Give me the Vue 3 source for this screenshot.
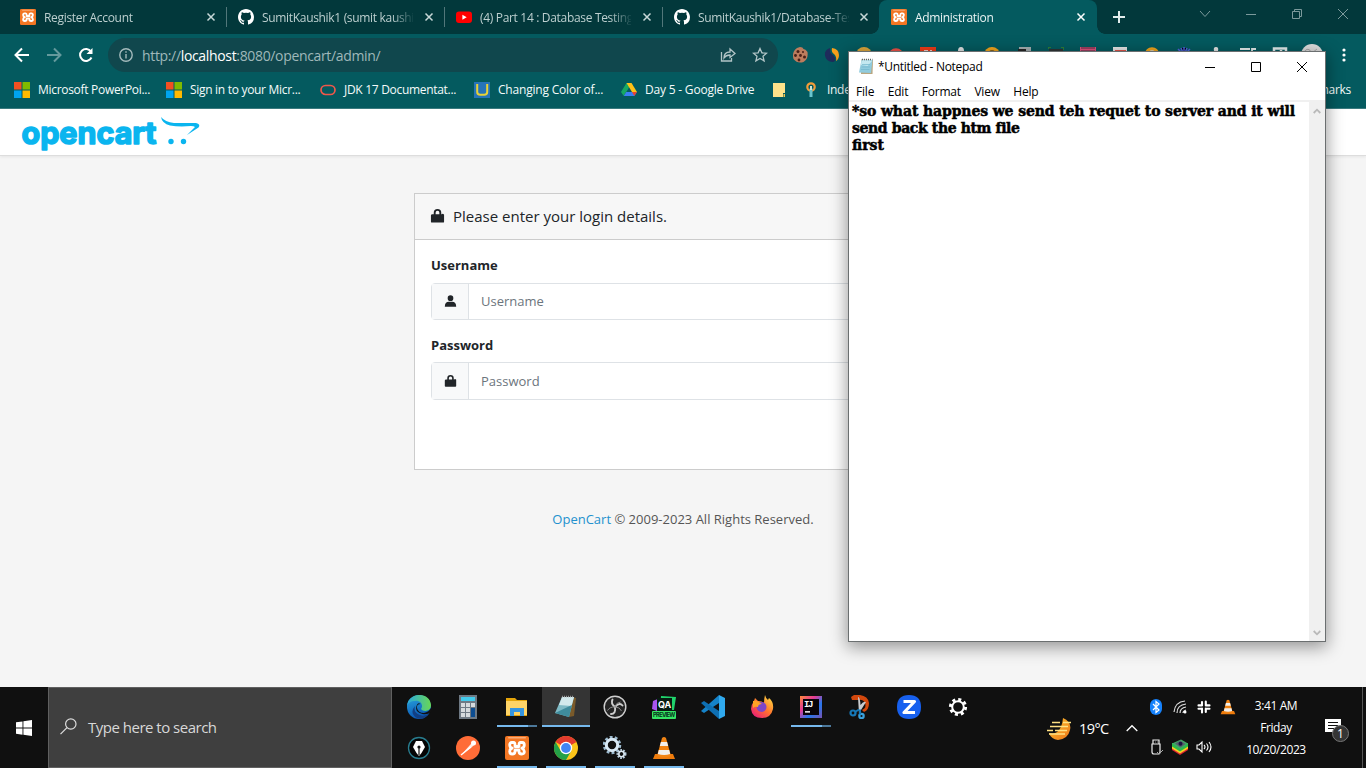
<script setup>
const cone = '<path d="M3 18h18l2 5H1z" fill="#ee7b0c"/><path d="M10 2q2-2 4 0l5 18q-7 3-14 0z" fill="#f18414"/><path d="M8.9 6h6.2l1.1 4H7.8zM6.8 14h10.4l1 4q-6 2-12.4 0z" fill="#f1efec"/>'
const xampp = '<rect width="24" height="24" rx="2" fill="#f37623"/><rect x="3" y="1" width="18" height="1.500" rx=".7" fill="#f9ac78"/><path d="M8.500 6.500H6.800Q4.700 6.500 4.700 9t2.500 3.200Q4.700 13 4.700 15.500t2.500 2.500Q10 18 10 15.500V14h4v1.500q0 2.500 2.800 2.500t2.500-2.500-2.500-3.300Q19.300 11.500 19.300 9t-2.100-2.500h-1.700Q14 6.500 14 9v1.500h-4V9q0-2.500-1.500-2.500z" fill="none" stroke="#fff" stroke-width="2.800" stroke-linejoin="round"/>'
const github = '<path fill="#fff" d="M8 0C3.6 0 0 3.6 0 8c0 3.5 2.3 6.5 5.5 7.6.4.1.5-.2.5-.4v-1.5c-2.2.5-2.7-1-2.7-1-.4-.9-.9-1.1-.9-1.1-.7-.5.1-.5.1-.5.8.1 1.2.8 1.2.8.7 1.2 1.9.9 2.3.7.1-.5.3-.9.5-1.1-1.8-.2-3.6-.9-3.6-4 0-.9.3-1.6.8-2.1-.1-.2-.4-1 .1-2.1 0 0 .7-.2 2.2.8a7.5 7.5 0 0 1 4 0c1.5-1 2.2-.8 2.2-.8.4 1.1.2 1.9.1 2.1.5.6.8 1.3.8 2.1 0 3.1-1.9 3.7-3.7 3.9.3.3.6.8.6 1.5v2.3c0 .2.1.5.5.4A8 8 0 0 0 16 8c0-4.4-3.6-8-8-8z"/>'
const microsoft = '<path fill="#f25022" d="M0 0h7.5v7.5H0z"/><path fill="#7fba00" d="M8.5 0H16v7.5H8.5z"/><path fill="#00a4ef" d="M0 8.5h7.5V16H0z"/><path fill="#ffb900" d="M8.5 8.5H16V16H8.5z"/>'
const chrome = '<circle cx="12" cy="12" r="12" fill="#fcc419"/><path d="M12 12 1.6 6A12 12 0 0 1 22.4 6z" fill="#e33b2e"/><path d="M1.6 6A12 12 0 0 0 12 24l5.2-9L12 12l-5.2 3z" fill="#24a148"/><circle cx="12" cy="12" r="6.2" fill="#fff"/><circle cx="12" cy="12" r="4.9" fill="#4285f4"/>'

const tabs = [
  { title: 'Register Account', icon: xampp, box: '0 0 24 24' },
  { title: 'SumitKaushik1 (sumit kaushi', icon: github, box: '0 0 16 16' },
  { title: '(4) Part 14 : Database Testing', icon: '<rect y="2.5" width="16" height="11.5" rx="3" fill="#f00"/><path d="M6.4 5.8v5l4.3-2.5z" fill="#fff"/>', box: '0 0 16 16' },
  { title: 'SumitKaushik1/Database-Tes', icon: github, box: '0 0 16 16' },
  { title: 'Administration', icon: xampp, box: '0 0 24 24', active: true }
]

const bookmarks = [
  { title: 'Microsoft PowerPoi...', icon: microsoft, w: 152 },
  { title: 'Sign in to your Micr...', icon: microsoft, w: 154 },
  { title: 'JDK 17 Documentat...', icon: '<rect x="1" y="3.5" width="14" height="9" rx="4.5" fill="none" stroke="#f0574a" stroke-width="1.7"/>', w: 154 },
  { title: 'Changing Color of...', icon: '<path fill="#2674b8" d="M0 0h16v16H0z"/><path d="M3.2 2v8q0 2.800 3 2.800h4q3 0 3-2.800V2" fill="none" stroke="#e8d237" stroke-width="2"/>', w: 147 },
  { title: 'Day 5 - Google Drive', icon: '<path d="M5.500 1h5L8 5.600 2.800 14 0 10z" fill="#16a763"/><path d="M5.500 1h5L16 10h-5z" fill="#ffc116"/><path d="M2.800 14 5.200 10H16l-2.700 4z" fill="#3a7ef2"/><path d="M11 10h5l-2.700 4z" fill="#e84334"/>', w: 150 },
  { title: '', icon: '<path d="M2 1h12v9h-3v5H2z" fill="#ffe28a"/><path d="M2 1h12v10h-2v4H2z" fill="#ffe28a"/><path d="M12.500 12H14v3h-1.500z" fill="#f1c24b"/>', w: 32 },
  { title: 'Inde', icon: '<circle cx="8" cy="5" r="3.700" fill="none" stroke="#f29d38" stroke-width="2.200"/><path d="M6.500 6.500h3V15h-3z" fill="#68c3cd"/><path d="M7 4h2v4H7z" fill="#cfe6d6"/>', w: 80 }
]

const extensions = [
  '<path d="M8 0q3 0 3.500 2 2 0 4 3 1 7-4 10-6 2-10-3Q-.5 5 5 1z" fill="#bd7c5d"/><g fill="#4a2018"><circle cx="6" cy="4.500" r="1.500"/><circle cx="3.500" cy="8.500" r="1.400"/><circle cx="8.500" cy="8.500" r="1.400"/><circle cx="7" cy="13" r="1.400"/><circle cx="12.500" cy="10" r="1.500"/><circle cx="11" cy="5" r="1"/></g>',
  '<path d="M6 1Q0 3 1 8.500q1 6.500 8 6.500 3-1 2-4-1-2.500-3.500-4-2-2-1.500-6z" fill="#1f2b5b"/><path d="M8 1q7 1 7 7 0 4-3 6 1-4-2-7Q7 5 8 1z" fill="#f9a11b"/>',
  '<circle cx="8" cy="8" r="8" fill="#dda73b"/>',
  '<path d="M2 9a6 6 0 0 1 12 0" fill="none" stroke="#ef5147" stroke-width="3.500"/><path d="M5 8a3 3 0 0 1 6 0z" fill="#83ccd3"/>',
  '<path d="M0 0h16v16H0z" fill="#f03b17"/><path d="M4 4h4M10 4h2" stroke="#fff" stroke-width="1.500"/>',
  '<path d="M3 4h3q0-4 3-4t3 4h3v10H3z" fill="#e1e3e4"/>',
  '<circle cx="8" cy="8" r="8" fill="#f3a61c"/><circle cx="8" cy="8" r="4" fill="none" stroke="#5a461d" stroke-width="1.500"/>',
  '<path d="M3 0h12v14H3z" fill="#a5b0b2"/><path d="M2 2h8v3H2z" fill="#252525"/>',
  '<path d="M1 2h14v11H1z" fill="#2f3536"/><path d="M0 2V0h3m10 0h3v3" fill="none" stroke="#2f7d37" stroke-width="2"/>',
  '<path d="M0 0h16v14H0z" fill="#e2537e"/><path d="M1 1h14M1 4h14" stroke="#562a40" stroke-width="1.200"/>',
  '<path d="M1 0h14v14H1z" fill="#e6e6e6"/><path d="M3 3h11v12H3z" fill="#e2554a"/>',
  '<circle cx="8" cy="7.500" r="5.800" fill="#d9d9d9" stroke="#f1a51b" stroke-width="3"/>',
  '<path d="M8 0v16M2 2l12 12M0 8h16M14 2 2 14M5 1l3 7 3-7" stroke="#5260e2" stroke-width="1.500"/>',
  '<path d="M2 4h4q-1-4 2-4t2 4h5v10H2z" fill="#e3e5e5"/>',
  '<path d="M0 2h10M0 5h7M12 14V2h4" fill="none" stroke="#e4eeee" stroke-width="1.800"/>',
  '<path d="M2 1.500h12v12H2zM9 3v10" fill="none" stroke="#e4eeee" stroke-width="2.500"/>'
]

const notepad = '<path d="m19 2 3 1-2 18-5 1z" fill="#7a5a2a"/><path d="M8 2h12l-5 20-14-4z" fill="#7fbac5"/><path d="M8 2h12l-2.500 9L5 10z" fill="#d3e9ec"/><path d="m1 18 17-8-3 12z" fill="#3f8b9c"/><path d="M8 1.500h12" stroke="#999" stroke-dasharray="1 1" stroke-width="1.500"/>'

const apps = [
  { name: 'edge', icon: '<defs><linearGradient id="eg" y2="1" x2=".3"><stop stop-color="#2ba9df"/><stop offset="1" stop-color="#0a57b5"/></linearGradient><linearGradient id="eg2"><stop stop-color="#2aa8df"/><stop offset="1" stop-color="#68d855"/></linearGradient></defs><circle cx="12" cy="12" r="12" fill="url(#eg)"/><path d="M0 11C1-3 23-4 24 10c0 7-8 7-10 4 3-4-1-9-6-8-4 0-7 2-8 5z" fill="url(#eg2)"/><path d="M8 11q-2 7 5 9 5 2 9-2-5 8-12 5-8-5-2-12z" fill="#123f84"/><path d="M13.500 9q-4 0-3.500 4 1 5 7 5 5-1 7-5l.5 4q-4 3-9 2-8-2-6-8 1-4 4-2z" fill="#111"/>' },
  { name: 'calculator', icon: '<path d="M3 0h18v24H3z" fill="#6e7984"/><path d="M5 2h14v4H5z" fill="#43cbed"/><path d="M5 8h4v4H5zm5 0h4v4h-4zm5 0h4v4h-4zM5 13h4v4H5zm5 0h4v4h-4zM5 18h4v4H5zm5 0h4v4h-4z" fill="#d5dadd"/><path d="M15 13h4v9h-4z" fill="#0d4d91"/>' },
  { name: 'explorer', open: 'split', icon: '<path d="M1 3h9l2 2h10v16H1z" fill="#e5a50a"/><path d="M1 6h21v14H1z" fill="#ffd467"/><path d="M5 13h14v8h-4v-4H9v4H5z" fill="#3695df"/>' },
  { name: 'notepad', open: 'current', icon: notepad },
  { name: 'recorder', icon: '<circle cx="12" cy="12" r="10.800" fill="#242424" stroke="#cfcfcf" stroke-width="1.400"/><path d="M9.500 4.500q-2 4 2.500 7.500M19.500 10.500q-3-3.500-7.500 1.500M8 19q5 0 4-7" fill="none" stroke="#cfcfcf" stroke-width="1.900" stroke-linecap="round"/><path d="M12 12q5 0 6.500 4M12 12q-5-.5-7.500 3.500M12 12q1-4.500 5.500-5" fill="none" stroke="#8c8c8c" stroke-width="1"/>' },
  { name: 'qa', icon: '<path d="m1 6 7-3-3 13-5-2z" fill="#a955f1"/><path d="m9 1 15 1-2 13H8z" fill="#20d36c"/><path d="M5 3h15v13H5z" fill="#071b11"/><text x="6" y="12.500" font-size="9" letter-spacing="0" font-weight="bold" font-family="Inter,sans-serif" fill="#fff">QA</text><rect y="16" width="24" height="8" rx="1" fill="#35e665"/><text x="1" y="22.300" font-size="5.800" textLength="22" font-weight="bold" font-family="Inter,sans-serif" fill="#07351b">PREVIEW</text>' },
  { name: 'code', icon: '<path d="M18 0v8L3 18l-3-2z" fill="#1583c9"/><path d="M18 24v-8L3 6 0 8z" fill="#0e6fb2"/><path d="m18 0 6 3v18l-6 3z" fill="#30a9ee"/>' },
  { name: 'firefox', icon: '<defs><linearGradient id="fg" x1="1" x2=".2" y2="1"><stop stop-color="#ffed43"/><stop offset=".55" stop-color="#ff742d"/><stop offset="1" stop-color="#e91c78"/></linearGradient></defs><path d="M15 0q1 4 3 5l1-2q5 4 4 11-2 9-11 9Q2 23 1 14q0-4 3-8l1-3 3 3q4 0 6 2 0-4 1-8z" fill="url(#fg)"/><circle cx="11.500" cy="12" r="5" fill="#7e45c7"/><path d="M3 6q4-1 9 3-4 0-4 3-3-1-5 1z" fill="#ffa125"/>' },
  { name: 'intellij', open: 'split', icon: '<defs><linearGradient id="ig" x2="1" y2="1"><stop stop-color="#ff8a39"/><stop offset=".35" stop-color="#e43a94"/><stop offset=".65" stop-color="#2478ed"/><stop offset="1" stop-color="#7853b3"/></linearGradient></defs><path d="M1 1h22v22H1z" fill="url(#ig)"/><path d="M4 4h16v16H4z" fill="#090409"/><text x="5" y="12" font-family="Liberation Mono,monospace" font-weight="bold" font-size="9" textLength="9" fill="#fff">IJ</text><path d="M6 16h5v1.700H6z" fill="#ddd"/>' },
  { name: 'snip', icon: '<path d="m3 2 3-2h6q8 1 9 8 0 7-5 9l-2-2q5-2 3-7-2-4-7-3H4z" fill="#d3480d"/><path d="M10 2q2 0 2.500 8 3-4 5.500-3l-5 8v4h-2z" fill="#c9cccf"/><circle cx="5" cy="18" r="2.500" fill="none" stroke="#1678b7" stroke-width="2.200"/><circle cx="13.500" cy="21" r="2.200" fill="none" stroke="#3aa0dc" stroke-width="2.200"/><path d="m7 17 4-2.500m1 0v5" stroke="#1678b7" stroke-width="2" fill="none"/>' },
  { name: 'zoom', icon: '<path d="M12 0q12 0 12 12t-12 12T0 12 12 0z" fill="#1760ee"/><path d="M6.500 6.500h11L7 17.500h11" fill="none" stroke="#fff" stroke-width="3.200" stroke-linejoin="round"/>' },
  { name: 'settings', icon: '<circle cx="12" cy="12" r="7.600" fill="none" stroke="#fff" stroke-width="3" stroke-dasharray="3 2.970" /><circle cx="12" cy="12" r="5.800" fill="none" stroke="#fff" stroke-width="2"/>' },
  { name: 'pen', icon: '<circle cx="12" cy="12" r="10.500" fill="#050505" stroke="#287c8e" stroke-width="1.300"/><path d="M9 5h6l3 6-3.500 6-2.500 3-2.500-3L6 11z" fill="#fff"/><circle cx="12" cy="11" r="1.600" fill="#111"/><path d="M12 11v8" stroke="#111" stroke-width="1.200"/>' },
  { name: 'postman', icon: '<circle cx="12" cy="12" r="12" fill="#ff6c37"/><path d="M6 18 14 9l2 2zM14 9l2-2 2 2-2 2" fill="#ffece5"/><circle cx="17.500" cy="7" r="2.500" fill="#fff"/><path d="m5 19 10-8" stroke="#fff" stroke-width="1.500"/>' },
  { name: 'xampp', open: 'full', icon: xampp },
  { name: 'chrome', open: 'full', icon: chrome },
  { name: 'services', open: 'full', icon: '<circle cx="9" cy="9" r="7" fill="none" stroke="#9dbbcf" stroke-width="4.500" stroke-dasharray="2.500 1.900"/><circle cx="9" cy="9" r="5.700" fill="none" stroke="#d8e8f4" stroke-width="3"/><circle cx="18.500" cy="18" r="3.500" fill="none" stroke="#b8cddd" stroke-width="3" stroke-dasharray="1.500 1"/><circle cx="18.500" cy="18" r="2.700" fill="none" stroke="#dce9f2" stroke-width="1.500"/>' },
  { name: 'vlc', open: 'full', icon: cone }
]

const tray = [
  '<rect x="2" width="12" height="16" rx="6" fill="#1682fc"/><path d="m5 5 6 6-3 2.500v-11L11 5l-6 6" fill="none" stroke="#fff" stroke-width="1.200"/>',
  '<path d="M2 13Q3 3 13 2M5 14Q5 6 14 5M8 14q0-5 6-6M11 14q0-2 3-3" fill="none" stroke="#ddd" stroke-width="1.200"/><circle cx="13" cy="13" r="1.500" fill="#fff"/>',
  '<path d="M6 3v3.500M9.800 2.500v4M6 9.500v4M9.800 9.500v3.500M2.500 6.400H6M10 6.400h3.500M2.500 9.700H6M10 9.700h3.500" stroke="#fff" stroke-width="2.100" stroke-linecap="round"/>',
  '<g transform="scale(.667)">' + cone + '</g>',
  '<path d="M4 5h8v8q0 2-2 2H6q-2 0-2-2zM5 5V1h6v4M7 3h.5M9 3h.5" fill="none" stroke="#eee" stroke-width="1.200"/><path d="m9 13 2 2 4-4" fill="none" stroke="#aaa"/>',
  '<path d="m0 11 8 5 8-5V7H0z" fill="#df2532"/><path d="m0 9.500 8 5 8-5V6H0z" fill="#f5d11f"/><path d="m0 7.500 8 5 8-5V4H0z" fill="#27ba4a"/><path d="m0 4.500 8 5.500 8-5.500L9 .5z" fill="#3fa765"/><path d="m3 4.500 5.500 4 5-3.500-5-3.500z" fill="#52636a"/><circle cx="8.500" cy="4.800" r="2" fill="#191342"/>',
  '<path d="M1 6h2l3-3v10l-3-3H1zM8 6q2 2 0 4M10.500 4.500q3 3.500 0 7M13 3q4 5 0 10" fill="none" stroke="#fff" stroke-width="1.100"/>'
]

const lockPath = 'M4 6V4.500a4 4 0 0 1 8 0V6h.500A1.500 1.500 0 0 1 15 7.500V14a1 1 0 0 1-1 1H2a1 1 0 0 1-1-1V7.500A1.500 1.500 0 0 1 2.500 6zM6 6h4V4.500a2 2 0 0 0-4 0z'
const fields = [
  { label: 'Username', path: 'M8 1a3.500 3.500 0 1 1 0 7 3.500 3.500 0 0 1 0-7M1 15q0-6 5-6h4q5 0 5 6z' },
  { label: 'Password', path: lockPath }
]
const menus = ['File', 'Edit', 'Format', 'View', 'Help']
</script>

<template>
  <div class="desktop">
    <header class="tabstrip">
      <div v-for="t in tabs" :key="t.title" class="tab" :class="{ active: t.active }">
        <svg class="fav" :viewBox="t.box" v-html="t.icon"></svg>
        <span class="tab-title">{{ t.title }}</span>
        <svg class="tab-close" viewBox="0 0 10 10"><path d="m1.500 1.500 7 7m0-7-7 7" /></svg>
      </div>
      <svg class="newtab" viewBox="0 0 14 14"><path d="M7 1v12M1 7h12" /></svg>
      <div class="winbtns">
        <svg viewBox="0 0 12 12"><path d="m1 3 5 5.500L11 3" /></svg>
        <svg viewBox="0 0 12 12"><path d="M1 6.500h10" /></svg>
        <svg viewBox="0 0 12 12"><path d="M1.500 3.500h7v7h-7zM3.500 3.500v-2h7v7h-2" /></svg>
        <svg viewBox="0 0 12 12"><path d="m1 1 10 10m0-10L1 11" /></svg>
      </div>
    </header>

    <div class="toolbar">
      <svg class="nav" viewBox="0 0 16 16"><path d="M15 8H2m6-6.500L1.500 8 8 14.500" /></svg>
      <svg class="nav dim" viewBox="0 0 16 16"><path d="M1 8h13M8 1.500 14.500 8 8 14.500" /></svg>
      <svg class="nav" viewBox="0 0 16 16"><path d="M13.500 10.500A6 6 0 1 1 13 4.500" /><path d="M14.500 1v6h-6z" class="solid" /></svg>
      <div class="address">
        <svg class="info" viewBox="0 0 14 14"><circle cx="7" cy="7" r="6.200" /><path d="M7 6v4.500M7 3.200v1.500" /></svg>
        <span class="url">http://<b>localhost</b>:8080/opencart/admin/</span>
        <svg class="share" viewBox="0 0 16 16"><path d="M1.500 5v9h10v-3M4 11q0-6 6-6V2l5 4.500-5 4V8Q6 8 4 11z" /></svg>
        <svg class="share" viewBox="0 0 16 16"><path d="m8 1.500 1.900 4.300 4.700.4-3.600 3.100 1.100 4.600L8 11.500l-4.100 2.400L5 9.300 1.400 6.200l4.700-.4z" /></svg>
      </div>
      <div class="extensions">
        <svg v-for="(e, i) in extensions" :key="i" viewBox="0 0 16 16" v-html="e"></svg>
        <svg class="avatar" viewBox="0 0 22 22"><circle cx="11" cy="11" r="11" fill="#dedede" /><path d="M3 8q4-6 8 1l5-4" stroke="#aaa" fill="none" /></svg>
      </div>
      <svg class="dots" viewBox="0 0 4 14"><circle cx="2" cy="2" r="1.600" /><circle cx="2" cy="7" r="1.600" /><circle cx="2" cy="12" r="1.600" /></svg>
    </div>

    <nav class="bookmarks">
      <div v-for="(b, i) in bookmarks" :key="i" class="bookmark" :style="{ width: b.w + 'px' }">
        <svg viewBox="0 0 16 16" v-html="b.icon"></svg>
        <span>{{ b.title }}</span>
      </div>
      <span class="other">Other bookmarks</span>
    </nav>

    <main class="page">
      <div class="page-head">
        <svg class="logo" width="182" height="40" viewBox="0 0 182 40">
          <text x="1.500" y="30.500" font-size="31" textLength="135" lengthAdjust="spacingAndGlyphs">opencart</text>
          <path d="M141 4q4 5 13 6h22q5 1 2.500 4.500L167 22l8-8q-1-1-4-1-12 1-21-.500-8-2-9-8.500z" />
          <circle cx="151" cy="28.500" r="2.700" /><circle cx="163.500" cy="28.500" r="2.700" />
        </svg>
      </div>
      <section class="card">
        <div class="card-head">
          <svg viewBox="0 0 16 16"><path :d="lockPath" /></svg>
          <span>Please enter your login details.</span>
        </div>
        <div class="card-body">
          <div v-for="f in fields" :key="f.label" class="field">
            <label>{{ f.label }}</label>
            <div class="group">
              <div class="addon"><svg viewBox="0 0 16 16"><path :d="f.path" /></svg></div>
              <div class="input">{{ f.label }}</div>
            </div>
          </div>
        </div>
      </section>
      <footer class="copyright"><a>OpenCart</a> © 2009-2023 All Rights Reserved.</footer>
    </main>

    <section class="notepad">
      <div class="np-title">
        <svg class="np-icon" viewBox="0 0 16 16"><path d="m3 1 12 .5-.5 14H3z" fill="#b9a680" /><path d="M3.500 1.500h11L13 14.500l-12-.5z" fill="#90cbdd" /><path d="m3.500 1.500 11 .5-5 5.500-6.500-1z" fill="#c4e8f0" /><path d="M4 6h8m-8.500 2.500H12m-9 2.500h8.500" stroke="#72b6cc" stroke-width=".7" /><path d="M4 1h10.500" stroke="#58666a" stroke-dasharray="1 1" stroke-width="1.500" /></svg>
        <span>*Untitled - Notepad</span>
        <div class="np-btns">
          <svg viewBox="0 0 12 12"><path d="M1 6.500h10" /></svg>
          <svg viewBox="0 0 12 12"><path d="M1.500 1.500h9v9h-9z" /></svg>
          <svg viewBox="0 0 12 12"><path d="m1 1 10 10m0-10L1 11" /></svg>
        </div>
      </div>
      <div class="np-menu"><span v-for="m in menus" :key="m">{{ m }}</span></div>
      <div class="np-body">
        <div class="np-text">
          <div class="l1">*so what happnes we send teh requet to server and it will</div>
          <div class="l2">send back the htm file</div>
          <div class="l3">first</div>
        </div>
        <div class="np-scroll">
          <svg viewBox="0 0 8 6"><path d="m.700 5 3.300-3.300L7.300 5" /></svg>
          <svg viewBox="0 0 8 6"><path d="m.700 1 3.300 3.300L7.300 1" /></svg>
        </div>
      </div>
    </section>

    <div class="taskbar">
      <div class="start"><svg viewBox="0 0 16 16"><path d="M0 2.300 6.500 1.400v6.200H0zM7.400 1.300 16 0v7.600H7.400zM0 8.500h6.500v6.200L0 13.800zM7.400 8.500H16V16l-8.600-1.200z" /></svg></div>
      <div class="search">
        <svg viewBox="0 0 17 17"><circle cx="10.800" cy="6" r="5.200" /><path d="m7 9.700-6.500 6.500" /></svg>
        <span>Type here to search</span>
      </div>
      <div class="apps">
        <div v-for="a in apps" :key="a.name" class="app" :class="a.open">
          <svg viewBox="0 0 24 24" v-html="a.icon"></svg>
          <i v-if="a.open"></i>
        </div>
      </div>
      <div class="weather">
        <svg viewBox="0 0 24 22"><defs><linearGradient id="moon" y2="1"><stop stop-color="#ffc02c" /><stop offset="1" stop-color="#ed781b" /></linearGradient></defs><path d="M16 0q9 4 7 12-2 9-12 10-7-1-9-7 12 3 14-15z" fill="url(#moon)" /><path d="M5 4.500h8M16 4.500h8M3 8.500h18M0 12.500h6M8 12.500h12M2 16h16" stroke="#ffe184" stroke-width="1.700" /></svg>
        <span>19°C</span>
      </div>
      <svg class="chev" viewBox="0 0 12 8"><path d="m.700 7 5.300-5.300L11.300 7" /></svg>
      <div class="tray"><svg v-for="(t, i) in tray" :key="i" viewBox="0 0 16 16" v-html="t"></svg></div>
      <div class="clock"><span>3:41 AM</span><span>Friday</span><span>10/20/2023</span></div>
      <div class="notice">
        <svg viewBox="0 0 16 16"><path d="M0 0h16v13h-5v3l-3-3H0z" fill="#fff" /><path d="M3 3.500h10M3 6.500h10M3 9.500h6" stroke="#111" /></svg>
        <span>1</span>
      </div>
      <div class="peek"></div>
    </div>
  </div>
</template>

<style>
body { margin: 0; overflow: hidden; }
</style>

<style scoped>
* { box-sizing: border-box; }
svg { display: block; flex: none; }
.desktop { position: relative; width: 1366px; height: 768px; overflow: hidden; display: flex; flex-direction: column; font-family: "Open Sans", "Noto Sans", sans-serif; font-size: 12px; letter-spacing: -.3px; background: #f5f5f5; white-space: nowrap; }

.tabstrip { height: 34px; flex: none; display: flex; background: #02383b; padding-left: 9px; }
.tab { width: 218px; height: 34px; display: flex; align-items: center; padding: 0 11px 0 11px; color: #bccfcf; position: relative; }
.tab:nth-child(4) { width: 216px; padding-right: 10px; border-bottom-right-radius: 8px; }
.tab:nth-child(-n+3)::after { content: ""; position: absolute; right: 0; top: 7px; width: 1px; height: 20px; background: #52777a; }
.tab.active { background: #045a5f; color: #e9f3f3; border-radius: 8px 8px 0 0; padding-left: 12px; }
.tab.active::before, .tab.active::after { content: ""; position: absolute; bottom: 0; width: 8px; height: 8px; }
.tab.active::before { left: -8px; background: radial-gradient(circle at 0 0, transparent 7.500px, #045a5f 8px); }
.tab.active::after { right: -8px; background: radial-gradient(circle at 100% 0, transparent 7.500px, #045a5f 8px); }
.fav { width: 16px; height: 16px; margin-right: 8px; }
.tab-title { width: 151px; overflow: hidden; margin-right: auto; letter-spacing: -.32px; -webkit-mask-image: linear-gradient(90deg, #000 130px, transparent 153px); mask-image: linear-gradient(90deg, #000 130px, transparent 153px); }
.tab-close { width: 10px; height: 10px; stroke: #c8d8d8; stroke-width: 1.500; }
.active .tab-close { stroke: #fff; }
.newtab { width: 14px; height: 14px; margin: 10px 0 0 15px; stroke: #e2ecec; stroke-width: 2; }
.winbtns { display: flex; gap: 34px; margin: 8px 0 0 73px; }
.winbtns svg { width: 12px; height: 12px; fill: none; stroke: #7c9a9c; }

.toolbar { height: 42px; flex: none; display: flex; align-items: center; background: #045a5f; padding-left: 14px; }
.nav { width: 16px; height: 16px; fill: none; stroke: #fff; stroke-width: 2; margin-right: 16px; }
.nav.dim { stroke: #659a9d; }
.nav .solid { fill: #fff; stroke: none; }
.address { width: 670px; height: 34px; margin-left: -2px; border-radius: 17px; background: #10474d; display: flex; align-items: center; padding: 0 10px 0 11px; color: #9fb8ba; font-size: 14px; }
.info { width: 14px; height: 14px; fill: none; stroke: #a4babc; stroke-width: 1.400; margin-right: 9px; }
.url { margin-right: auto; letter-spacing: -.34px; }
.url b { color: #fff; font-weight: 400; }
.share { width: 16px; height: 16px; fill: none; stroke: #b2c5c7; stroke-width: 1.300; margin-left: 16px; }
.extensions { display: flex; gap: 16px; margin-left: 14px; align-items: center; }
.extensions svg { width: 16px; height: 16px; }
.extensions .avatar { width: 22px; height: 22px; margin-left: -3px; }
.dots { width: 4px; height: 14px; fill: #fff; margin-left: auto; margin-right: 20px; }

.bookmarks { height: 33px; flex: none; display: flex; align-items: center; background: #045a5f; border-bottom: 1px solid #3b7b80; padding: 0 15px 5px 14px; color: #f4fafa; }
.bookmark { display: flex; gap: 8px; align-items: center; flex: none; }
.bookmark svg { width: 16px; height: 16px; }
.bookmark:nth-child(4), .bookmark:nth-child(5) { letter-spacing: -.2px; }
.other { margin-left: auto; }

.page { height: 578px; flex: none; letter-spacing: 0; }
.page-head { height: 47px; background: #fff; border-bottom: 1px solid #ddd; box-shadow: 0 1px 3px #0001; padding: 4px 0 0 20px; }
.logo { fill: #0ab5ef; font-family: Inter, sans-serif; font-weight: 700; }
.logo text { stroke: #0ab5ef; stroke-width: 1.600; stroke-linejoin: round; letter-spacing: 0; }
.card { width: 538px; height: 277px; margin: 37px auto 0; background: #fff; border: 1px solid #ccc; color: #212529; }
.card-head { height: 46px; display: flex; align-items: center; gap: 8px; padding: 0 0 2px 15px; background: #f7f7f7; border-bottom: 1px solid #ccc; font-size: 15px; }
.card-head svg { width: 15px; height: 16px; fill: #212529; }
.card-body { padding: 15px 16px; font-size: 13px; }
.field { height: 80px; }
.field label { display: block; height: 28px; line-height: 20px; font-weight: 700; }
.group { height: 37px; display: flex; border: 1px solid #dee2e6; border-radius: 4px; }
.field + .field .group { height: 38px; margin-top: -1px; }
.addon { width: 37px; background: #f8f9fa; border-right: 1px solid #dee2e6; display: flex; align-items: center; justify-content: center; padding-bottom: 1px; }
.addon svg { width: 13px; height: 14px; fill: #212529; }
.input { padding: 0 0 2px 12px; display: flex; align-items: center; color: #6c757d; }
.field + .field .input { padding-bottom: 0; }
.copyright { margin-top: 39px; text-align: center; font-size: 13px; line-height: 20px; color: #555; }
.copyright a { color: #2391ce; }

.notepad { position: absolute; left: 848px; top: 51px; width: 478px; height: 591px; display: flex; flex-direction: column; background: #fff; border: 1px solid #6b6f70; box-shadow: 0 4px 16px 1px #0006; color: #000; }
.np-title { height: 30px; flex: none; display: flex; align-items: center; padding: 0 17px 0 9px; }
.np-title span { padding-bottom: 2px; }
.np-icon { width: 16px; height: 17px; margin: 0 4px 2px 0; }
.np-btns { display: flex; gap: 34px; margin-left: auto; padding-bottom: 1px; }
.np-btns svg { width: 12px; height: 12px; fill: none; stroke: #000; }
.np-menu { height: 20px; flex: none; display: flex; gap: 13.500px; align-items: center; padding-left: 7px; letter-spacing: -.2px; border-bottom: 2px solid #f0f0f0; }
.np-body { flex: 1; display: flex; }
.np-text { flex: 1; padding: 1px 0 0 3px; font: 900 14px/17px "DejaVu Serif", serif; -webkit-text-stroke: .5px #000; }
.l1 { letter-spacing: -.12px; }
.l2 { letter-spacing: -.38px; }
.l3 { letter-spacing: 0; }
.np-scroll { width: 16px; background: #f0f0f0; display: flex; flex-direction: column; justify-content: space-between; align-items: center; padding: 6px 1px 5px 0; }
.np-scroll svg { width: 8px; height: 6px; fill: none; stroke: #b9b9b9; stroke-width: 1.800; }

.taskbar { height: 81px; flex: none; background: #101010; color: #fff; display: flex; align-items: center; }
.start { width: 48px; display: flex; justify-content: center; fill: #fff; }
.start svg { width: 16px; height: 16px; }
.search { width: 344px; height: 81px; background: #3f3f3f; border: 1px solid #606060; display: flex; align-items: center; padding: 0 0 2px 11px; color: #d8d8d8; font-size: 15px; letter-spacing: -.5px; }
.search svg { width: 17px; height: 17px; fill: none; stroke: #ddd; stroke-width: 1.200; margin-right: 11px; }
.apps { width: 592px; margin-left: 3px; display: grid; grid-template-columns: repeat(12, 48px); column-gap: 1px; grid-auto-rows: 40px; row-gap: 1px; }
.app { display: flex; align-items: center; justify-content: center; position: relative; }
.app svg { width: 24px; height: 24px; }
.app i { position: absolute; left: 4px; right: 4px; bottom: 0; height: 2px; background: #76b9ed; }
.app.current { background: #343434; }
.app.current i { left: 0; right: 0; }
.app.split i { background: linear-gradient(90deg, #76b9ed 31px, #4c789a 31px); }
.weather { display: flex; align-items: center; gap: 8px; margin-left: 60px; font-size: 14.500px; width: 72px; letter-spacing: -.6px; padding-top: 2px; }
.weather svg { width: 24px; height: 22px; }
.chev { width: 12px; height: 8px; fill: none; stroke: #fff; stroke-width: 1.300; margin-left: 7px; }
.tray { display: grid; grid-template-columns: repeat(4, 16px); gap: 24px 8px; margin-left: 10px; padding-bottom: 1px; }
.tray svg { width: 16px; height: 16px; }
.clock { width: 80px; display: flex; flex-direction: column; align-items: center; line-height: 22px; padding-top: 1px; letter-spacing: -.4px; }
.notice { width: 24px; height: 24px; margin-left: 9px; position: relative; padding-top: 3px; }
.notice svg { width: 16px; height: 16px; }
.notice span { position: absolute; left: 7px; top: 9px; width: 17px; height: 17px; border-radius: 50%; background: #353535; border: 1px solid #777; font-size: 12px; line-height: 15px; text-align: center; letter-spacing: 0; }
.peek { width: 1px; height: 81px; background: #555; margin-left: auto; margin-right: 3px; }
</style>
